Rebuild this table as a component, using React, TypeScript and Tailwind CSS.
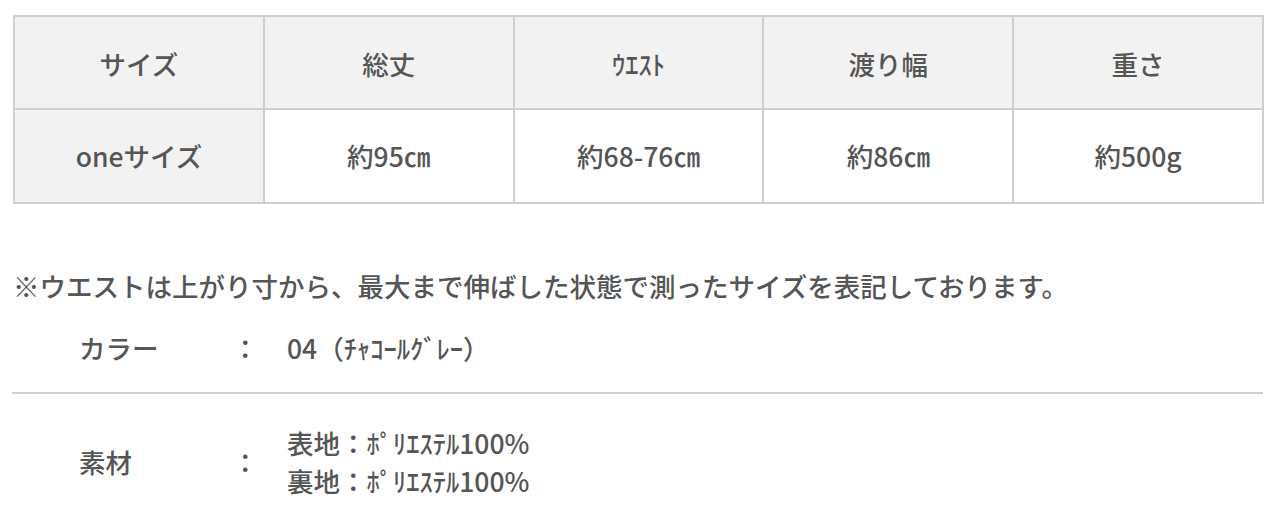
import React from "react";

const headers = ["サイズ", "総丈", "ｳｴｽﾄ", "渡り幅", "重さ"];
const values = ["約95㎝", "約68-76㎝", "約86㎝", "約500g"];

export default function App() {
  return (
    <div
      className="w-[1280px] h-[519px] bg-white overflow-hidden text-[#555] font-medium"
      style={{ fontFamily: '"Noto Sans CJK JP", "Noto Sans", sans-serif' }}
    >
      <div className="pt-[15px] pl-[13px]">
        <table className="border-collapse w-[1251px] table-fixed text-[26.5px]">
          <thead>
            <tr className="h-[93px] bg-[#f2f2f2]">
              {headers.map((h) => (
                <th key={h} className="border-2 border-[#cfcfcf] font-medium text-center pt-[3px]">
                  {h}
                </th>
              ))}
            </tr>
          </thead>
          <tbody>
            <tr className="h-[94px]">
              <td className="border-2 border-[#cfcfcf] bg-[#f2f2f2] text-center">oneサイズ</td>
              {values.map((v) => (
                <td key={v} className="border-2 border-[#cfcfcf] text-center">
                  {v}
                </td>
              ))}
            </tr>
          </tbody>
        </table>
      </div>

      <p className="mt-[64px] pl-[13px] text-[26.5px] leading-[36px]">
        ※ウエストは上がり寸から、最大まで伸ばした状態で測ったサイズを表記しております。
      </p>

      <div className="mx-[12px] w-[1251px] text-[26.5px]">
        <div className="flex items-center h-[90px] border-b-2 border-[#cfcfcf]">
          <div className="w-[220px] pl-[67px]">カラー</div>
          <div className="w-[55px]">：</div>
          <div>04（ﾁｬｺｰﾙｸﾞﾚｰ）</div>
        </div>
        <div className="flex items-center h-[136px]">
          <div className="w-[220px] pl-[67px]">素材</div>
          <div className="w-[55px]">：</div>
          <div className="leading-[38px]">
            <div>表地：ﾎﾟﾘｴｽﾃﾙ100%</div>
            <div>裏地：ﾎﾟﾘｴｽﾃﾙ100%</div>
          </div>
        </div>
      </div>
    </div>
  );
}
